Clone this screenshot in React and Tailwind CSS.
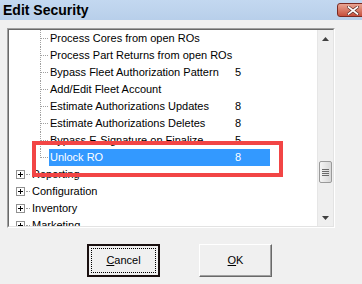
import React from "react";

const children = [
  { label: "Process Cores from open ROs", value: "" },
  { label: "Process Part Returns from open ROs", value: "" },
  { label: "Bypass Fleet Authorization Pattern", value: "5" },
  { label: "Add/Edit Fleet Account", value: "" },
  { label: "Estimate Authorizations Updates", value: "8" },
  { label: "Estimate Authorizations Deletes", value: "8" },
  { label: "Bypass E-Signature on Finalize", value: "5" },
  { label: "Unlock RO", value: "8", selected: true, last: true },
];

const roots = ["Reporting", "Configuration", "Inventory", "Marketing"];

const ChildRow = ({ label, value, selected, last }) => (
  <div className="flex h-[17px] items-center">
    <div className="relative h-full w-[31px] shrink-0">
      <span
        className={`absolute left-[31px] top-0 border-l border-dotted border-[#a0a0a0] ${last ? "h-[9px]" : "h-[17px]"}`}
      ></span>
      <span className="absolute left-[31px] top-[8px] w-[8px] border-t border-dotted border-[#a0a0a0]"></span>
    </div>
    <div
      className={`ml-[9px] flex h-[17px] w-[221px] items-center pl-[1px] ${selected ? "bg-[#3399ff] text-white" : "text-black"}`}
    >
      <span className="w-[185px] whitespace-nowrap">{label}</span>
      <span>{value}</span>
    </div>
  </div>
);

const RootRow = ({ label }) => (
  <div className="flex h-[17px] items-center">
    <div className="ml-[7px] flex h-[9px] w-[9px] shrink-0 items-center justify-center border border-[#919191] bg-white">
      <div className="relative h-[5px] w-[5px]">
        <span className="absolute left-0 top-[2px] h-[1px] w-[5px] bg-black"></span>
        <span className="absolute left-[2px] top-0 h-[5px] w-[1px] bg-black"></span>
      </div>
    </div>
    <span className="ml-[1px] w-[4px] border-t border-dotted border-[#a0a0a0]"></span>
    <span className="ml-[1px] whitespace-nowrap pl-[1px]">{label}</span>
  </div>
);

const Scrollbar = () => (
  <div className="flex w-[16px] shrink-0 flex-col border-l border-[#e6e6e6] bg-[#efefef]">
    <div className="flex h-[17px] items-center justify-center">
      <svg width="7" height="4" viewBox="0 0 7 4">
        <path d="M3.5 0 L7 4 L0 4 Z" fill="#404040" />
      </svg>
    </div>
    <div className="h-[114px]"></div>
    <div className="mx-[1px] flex h-[22px] flex-col items-center justify-center gap-[1px] rounded-[2px] border border-[#9a9a9a] bg-gradient-to-r from-[#f4f4f4] to-[#d8d8d8]">
      <span className="h-[1px] w-[7px] bg-[#6a6a6a]"></span>
      <span className="h-[1px] w-[7px] bg-[#6a6a6a]"></span>
      <span className="h-[1px] w-[7px] bg-[#6a6a6a]"></span>
      <span className="h-[1px] w-[7px] bg-[#6a6a6a]"></span>
    </div>
    <div className="flex-1"></div>
    <div className="flex h-[17px] items-center justify-center">
      <svg width="7" height="4" viewBox="0 0 7 4">
        <path d="M0 0 L7 0 L3.5 4 Z" fill="#404040" />
      </svg>
    </div>
  </div>
);

const Button = ({ children, isDefault }) => (
  <button
    className={`flex h-[33px] w-[73px] items-center justify-center bg-[#f0f0f0] text-[11px] text-black ${
      isDefault
        ? "border-2 border-[#1a1010]"
        : "border border-t-white border-l-white border-r-[#696969] border-b-[#696969] shadow-[inset_-1px_-1px_0_#a0a0a0]"
    }`}
  >
    {isDefault ? (
      <span className="flex h-[25px] w-[65px] items-center justify-center border border-dotted border-black">
        {children}
      </span>
    ) : (
      children
    )}
  </button>
);

export default function App() {
  return (
    <div
      className="relative flex h-[284px] w-[362px] flex-col overflow-hidden bg-[#f0f0f0] text-[11px] text-black"
      style={{ fontFamily: '"Liberation Sans", Arial, sans-serif' }}
    >
      {/* Title bar */}
      <div className="flex h-[20px] shrink-0 items-center justify-between bg-gradient-to-b from-[#c3d8f0] to-[#b8cfea] pl-[3px]">
        <span className="text-[14px] font-bold leading-none text-black">Edit Security</span>
        <div className="mr-[-6px] flex h-[14px] w-[31px] items-center justify-center rounded-[3px] border border-[#7a2a22] bg-gradient-to-b from-[#e8a493] to-[#c74f3c]">
          <svg width="12" height="9" viewBox="0 0 12 9">
            <path d="M1.5 1 L10.5 8 M10.5 1 L1.5 8" stroke="#5a2a24" strokeWidth="3" strokeLinecap="square" />
            <path d="M1.5 1 L10.5 8 M10.5 1 L1.5 8" stroke="#ffffff" strokeWidth="1.6" strokeLinecap="square" />
          </svg>
        </div>
      </div>

      {/* Tree view */}
      <div className="ml-[7px] mt-[8px] h-[200px] w-[328px] border border-t-[#a0a0a0] border-l-[#a0a0a0] border-r-white border-b-white">
        <div className="flex h-full w-full border border-t-[#696969] border-l-[#696969] border-r-[#e3e3e3] border-b-[#e3e3e3] bg-white">
          <div className="flex-1 overflow-hidden">
            {children.map((c) => (
              <ChildRow key={c.label} {...c} />
            ))}
            {roots.map((r) => (
              <RootRow key={r} label={r} />
            ))}
          </div>
          <Scrollbar />
        </div>
      </div>

      {/* Buttons */}
      <div className="mt-[16px] flex gap-[39px] pl-[87px]">
        <Button isDefault>
          <span>
            <span className="underline">C</span>ancel
          </span>
        </Button>
        <Button>
          <span>
            <span className="underline">O</span>K
          </span>
        </Button>
      </div>

      {/* Red highlight annotation */}
      <div className="pointer-events-none absolute left-[32px] top-[141px] h-[36px] w-[251px] border-4 border-[#f24545]"></div>
    </div>
  );
}
